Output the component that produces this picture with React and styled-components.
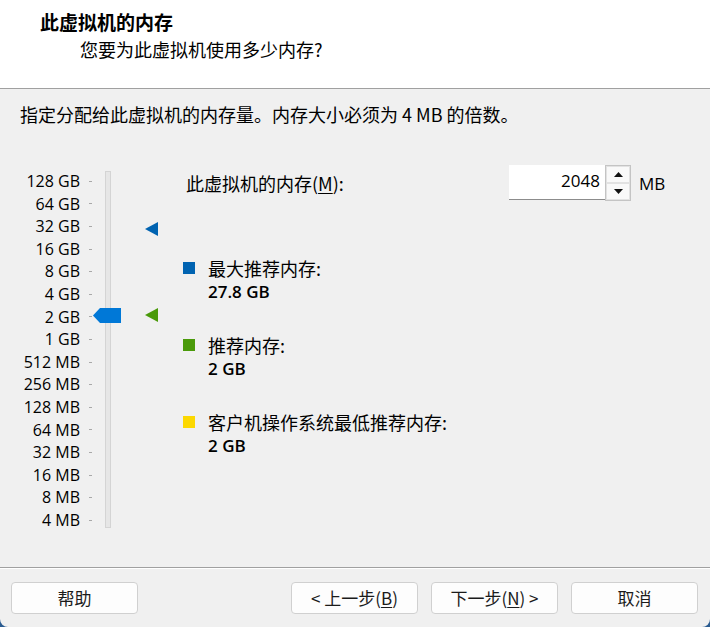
import React from 'react';
import styled, { createGlobalStyle } from 'styled-components';

const GlobalStyle = createGlobalStyle`
  html, body { margin: 0; padding: 0; background: #2b5c91; }
  body { font-family: "Noto Sans CJK SC", "Noto Sans", sans-serif; }
  * { box-sizing: border-box; }
`;

const Window = styled.div`
  width: 710px;
  height: 627px;
  background: #f0f0f0;
  border-radius: 0 0 8px 8px;
  overflow: hidden;
  display: flex;
  flex-direction: column;
  color: #000;
  font-family: "Noto Sans CJK SC", "Noto Sans", sans-serif;
  font-size: 18px;
`;

const Header = styled.header`
  height: 89px;
  background: #fff;
  border-bottom: 1px solid #a0a0a0;
  padding-top: 9px;
`;

const Title = styled.div`
  margin-left: 40px;
  font-weight: 700;
  font-size: 19px;
  line-height: 26px;
`;

const Subtitle = styled.div`
  margin-left: 80px;
  margin-top: 1px;
  line-height: 26px;
`;

const Body = styled.main`
  flex: 1;
  display: flex;
  flex-direction: column;
`;

const Instruction = styled.div`
  padding: 12px 0 0 20px;
  line-height: 26px;
`;

const Main = styled.div`
  margin-top: 38px;
  display: flex;
  align-items: flex-start;
`;

const Scale = styled.div`
  position: relative;
  width: 183px;
  padding-top: 5px;
  display: grid;
  grid-template-columns: 80px 9px 3px 13px 6px;
  grid-auto-rows: 22.6px;
`;

const ScaleLabel = styled.div`
  grid-column: 1;
  text-align: right;
  line-height: 22.6px;
  font-family: "Open Sans", "Noto Sans", sans-serif;
  font-size: 16px;
  white-space: nowrap;
`;

const Tick = styled.div`
  grid-column: 3;
  align-self: center;
  height: 1px;
  background: #a8a8a8;
`;

const Track = styled.div`
  grid-column: 5;
  grid-row: 1 / span 16;
  margin: 1px 0 4px;
  background: #e6e6e6;
  border: 1px solid #d4d4d4;
`;

const Handle = styled.div`
  position: absolute;
  left: 93px;
  top: 143px;
  width: 28px;
  height: 15px;
  background: #0078d7;
  clip-path: polygon(0 50%, 7px 0, 100% 0, 100% 100%, 7px 100%);
`;

const Marker = styled.div`
  position: absolute;
  left: 145px;
  top: ${(p) => p.$top}px;
  width: 13px;
  height: 14px;
  background: ${(p) => p.$color};
  clip-path: polygon(0 50%, 100% 0, 100% 100%);
`;

const Info = styled.div`
  display: flex;
  flex-direction: column;
`;

const SpinRow = styled.div`
  display: flex;
  align-items: center;
  height: 36px;
`;

const SpinLabel = styled.div`
  width: 326px;
  padding-left: 3px;
`;

const Underline = styled.span`
  text-decoration: underline;
  text-underline-offset: 2px;
`;

const SpinBox = styled.div`
  display: flex;
  height: 36px;
`;

const SpinInput = styled.div`
  width: 96px;
  height: 35px;
  background: #fff;
  border-bottom: 1px solid #8c8c8c;
  text-align: right;
  padding-right: 5px;
  line-height: 31px;
  font-family: "Open Sans", "Noto Sans", sans-serif;
  font-size: 17px;
`;

const SpinButtons = styled.div`
  width: 26px;
  height: 36px;
  display: flex;
  flex-direction: column;
  border: 1px solid #c4c4c4;
  background: #f7f7f7;
`;

const SpinButton = styled.div`
  flex: 1;
  display: flex;
  align-items: center;
  justify-content: center;
  border: 1px solid #e2e2e2;
  background: #f9f9f9;
`;

const Unit = styled.div`
  margin-left: 8px;
  font-family: "Open Sans", "Noto Sans", sans-serif;
  font-size: 17px;
`;

const Legend = styled.div`
  margin-top: 55px;
  display: flex;
  flex-direction: column;
  gap: 29px;
`;

const LegendItem = styled.div`
  display: grid;
  grid-template-columns: 12px auto;
  column-gap: 13px;
  grid-auto-rows: 24px;
`;

const Swatch = styled.div`
  width: 12px;
  height: 12px;
  align-self: center;
  background: ${(p) => p.$color};
`;

const LegendText = styled.div`
  grid-column: 2;
  line-height: 24px;
  white-space: nowrap;
`;

const LegendValue = styled(LegendText)`
  font-family: "Open Sans", "Noto Sans", sans-serif;
  font-size: 17px;
  font-weight: 600;
`;

const Footer = styled.footer`
  height: 60px;
  border-top: 1px solid #a0a0a0;
  box-shadow: inset 0 1px 0 #ffffff;
  padding: 14px 12px 0 11px;
  display: flex;
`;

const ButtonGroup = styled.div`
  margin-left: auto;
  display: flex;
  gap: 13px;
`;

const Button = styled.button`
  width: 127px;
  height: 32px;
  border: 1px solid #d0d0d0;
  border-radius: 4px;
  background: #fdfdfd;
  color: #1b1b1b;
  font-family: "Noto Sans CJK SC", "Noto Sans", sans-serif;
  font-size: 17px;
  padding: 0;
  line-height: 30px;
`;

const Arrow = ({ up }) => (
  <svg width="9" height="5" viewBox="0 0 9 5">
    <path d={up ? 'M0 5 L4.5 0 L9 5 Z' : 'M0 0 L4.5 5 L9 0 Z'} fill="#111" />
  </svg>
);

const labels = [
  '128 GB', '64 GB', '32 GB', '16 GB', '8 GB', '4 GB', '2 GB', '1 GB',
  '512 MB', '256 MB', '128 MB', '64 MB', '32 MB', '16 MB', '8 MB', '4 MB',
];

export default function App() {
  return (
    <>
      <GlobalStyle />
      <Window>
        <Header>
          <Title>此虚拟机的内存</Title>
          <Subtitle>您要为此虚拟机使用多少内存?</Subtitle>
        </Header>
        <Body>
          <Instruction>指定分配给此虚拟机的内存量。内存大小必须为 4 MB 的倍数。</Instruction>
          <Main>
            <Scale>
              {labels.map((l, i) => (
                <React.Fragment key={l}>
                  <ScaleLabel style={{ gridRow: i + 1 }}>{l}</ScaleLabel>
                  <Tick style={{ gridRow: i + 1 }} />
                </React.Fragment>
              ))}
              <Track />
              <Handle />
              <Marker $top={57} $color="#0063b1" />
              <Marker $top={143} $color="#4a9a0a" />
            </Scale>
            <Info>
              <SpinRow>
                <SpinLabel>
                  此虚拟机的内存(<Underline>M</Underline>):
                </SpinLabel>
                <SpinBox>
                  <SpinInput>2048</SpinInput>
                  <SpinButtons>
                    <SpinButton><Arrow up /></SpinButton>
                    <SpinButton><Arrow /></SpinButton>
                  </SpinButtons>
                </SpinBox>
                <Unit>MB</Unit>
              </SpinRow>
              <Legend>
                <LegendItem>
                  <Swatch $color="#0063b1" />
                  <LegendText>最大推荐内存:</LegendText>
                  <LegendValue>27.8 GB</LegendValue>
                </LegendItem>
                <LegendItem>
                  <Swatch $color="#4a9a0a" />
                  <LegendText>推荐内存:</LegendText>
                  <LegendValue>2 GB</LegendValue>
                </LegendItem>
                <LegendItem>
                  <Swatch $color="#fcd800" />
                  <LegendText>客户机操作系统最低推荐内存:</LegendText>
                  <LegendValue>2 GB</LegendValue>
                </LegendItem>
              </Legend>
            </Info>
          </Main>
        </Body>
        <Footer>
          <Button>帮助</Button>
          <ButtonGroup>
            <Button>&lt; 上一步(<Underline>B</Underline>)</Button>
            <Button>下一步(<Underline>N</Underline>) &gt;</Button>
            <Button>取消</Button>
          </ButtonGroup>
        </Footer>
      </Window>
    </>
  );
}
